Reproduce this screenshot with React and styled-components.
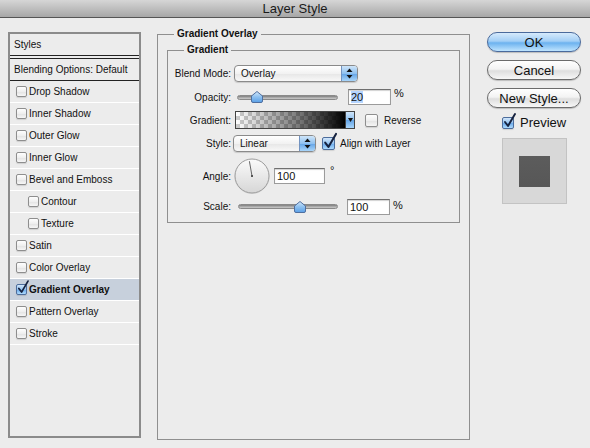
import React from 'react';
import styled, { createGlobalStyle } from 'styled-components';

const Global = createGlobalStyle`
  html, body { margin: 0; padding: 0; background: #ececec; }
  body { font-family: "Liberation Sans", Arial, sans-serif; font-size: 10px; color: #111; }
  * { box-sizing: border-box; }
`;

const Window = styled.div`
  width: 590px;
  height: 448px;
  background: #ececec;
  display: flex;
  flex-direction: column;
  overflow: hidden;
`;

const TitleBar = styled.div`
  height: 18px;
  flex: none;
  border-bottom: 1px solid #555;
  background: linear-gradient(#d6d6d6, #a7a7a7);
  display: flex;
  align-items: center;
  justify-content: center;
  font-size: 13px;
  color: #1a1a1a;
  padding-bottom: 1px;
`;

const Body = styled.div`
  display: flex;
  align-items: flex-start;
  padding: 14px 0 0 8px;
`;

/* ---------- styles list ---------- */
const StylesList = styled.div`
  width: 133px;
  height: 406px;
  border: 2px solid #8b8b8b;
  display: flex;
  flex-direction: column;
  flex: none;
`;

const ListHeader = styled.div`
  height: 22px;
  border-bottom: 1px solid #222;
  display: flex;
  align-items: center;
  padding-left: 4px;
`;

const BlendRow = styled.div`
  margin-top: 2px;
  height: 23px;
  border-top: 1px solid #222;
  border-bottom: 1px solid #222;
  display: flex;
  align-items: center;
  padding-left: 4px;
`;

const Item = styled.div`
  height: 22px;
  border-bottom: 1px solid #fff;
  display: flex;
  align-items: center;
  gap: 2px;
  padding-left: ${p => (p.$indent ? 18 : 6)}px;
  background: ${p => (p.$selected ? '#c7d0dc' : 'transparent')};
  font-weight: ${p => (p.$selected ? 'bold' : 'normal')};
`;

/* ---------- checkbox ---------- */
const Box = styled.span`
  position: relative;
  display: inline-block;
  flex: none;
  width: ${p => p.$size}px;
  height: ${p => p.$size}px;
  border: 1px solid ${p => (p.$checked ? '#4d6d9c' : '#8e8e8e')};
  border-radius: 2px;
  background: ${p =>
    p.$checked
      ? 'linear-gradient(#d2e6fa, #93c3f2 50%, #6aa9ea 51%, #addafd)'
      : 'linear-gradient(#fefefe, #efefef 50%, #e2e2e2 51%, #f6f6f6)'};
  box-shadow: 0 1px 1px rgba(0, 0, 0, 0.12);
`;

const Mark = styled.svg`
  position: absolute;
  left: 0;
  top: -3px;
  overflow: visible;
`;

const Check = ({ checked, size = 11 }) => (
  <Box $checked={checked} $size={size}>
    {checked && (
      <Mark width={size} height={size} viewBox="0 0 12 12">
        <path d="M2 7 L5 11 L12 -1" fill="none" stroke="#16223f" strokeWidth="1.9" strokeLinecap="round" strokeLinejoin="round" />
      </Mark>
    )}
  </Box>
);

/* ---------- main panel ---------- */
const Group = styled.fieldset`
  margin: 0;
  border: 1px solid #8f8f8f;
  padding: ${p => p.$pad};
  width: ${p => p.$w}px;
  height: ${p => p.$h}px;
  min-width: 0;
  flex: none;
`;

const Outer = styled(Group)`
  margin-left: 16px;
  margin-top: -4px;
`;

const Legend = styled.legend`
  font-weight: bold;
  font-size: 10px;
  line-height: 12px;
  padding: 0 3px;
  margin-left: ${p => p.$ml}px;
`;

const Row = styled.div`
  display: flex;
  align-items: center;
  height: ${p => p.$h}px;
`;

const Label = styled.div`
  width: 66px;
  flex: none;
  text-align: right;
  padding-right: 3px;
`;

const Select = styled.div`
  width: ${p => p.$w}px;
  height: 17px;
  margin-left: ${p => p.$ml || 0}px;
  border: 1px solid #8a8a8a;
  border-radius: 4px;
  background: linear-gradient(#ffffff, #f2f2f2 50%, #e6e6e6 51%, #f8f8f8);
  box-shadow: 0 1px 1px rgba(0, 0, 0, 0.15);
  display: flex;
  align-items: stretch;
  overflow: hidden;
  flex: none;
`;

const SelectText = styled.span`
  flex: 1;
  padding-left: 6px;
  display: flex;
  align-items: center;
`;

const Stepper = styled.span`
  width: 16px;
  border-left: 1px solid #7393c0;
  background: linear-gradient(#cfe5f9, #8fc1f0 50%, #62a3e6 51%, #a8d5fa);
  display: flex;
  align-items: center;
  justify-content: center;
`;

const Slider = styled.div`
  position: relative;
  width: ${p => p.$w}px;
  height: 14px;
  margin-left: ${p => p.$ml}px;
  display: flex;
  align-items: center;
  flex: none;
`;

const Track = styled.div`
  width: 100%;
  height: 5px;
  border-radius: 3px;
  background: linear-gradient(#7d7d7d, #a9a9a9 50%, #cacaca);
  border: 1px solid #8a8a8a;
`;

const Thumb = styled.svg`
  position: absolute;
  top: 1px;
  margin-left: -6px;
`;

const Field = styled.div`
  width: ${p => p.$w}px;
  height: 16px;
  margin-left: ${p => p.$ml}px;
  border: 1px solid #9b9b9b;
  border-top-color: #6f6f6f;
  background: #fff;
  box-shadow: inset 0 1px 1px rgba(0, 0, 0, 0.18);
  font-size: 11px;
  padding-left: 2px;
  display: flex;
  align-items: center;
  flex: none;
`;

const Selected = styled.span`
  background: #b5d5ff;
`;

const Unit = styled.span`
  margin-left: ${p => p.$ml || 3}px;
  font-size: 11px;
  align-self: flex-start;
  margin-top: ${p => p.$mt || 2}px;
`;

const GradientBar = styled.div`
  width: 111px;
  height: 18px;
  margin-left: 1px;
  border: 1px solid #444;
  background:
    linear-gradient(to right, rgba(0, 0, 0, 0), rgba(0, 0, 0, 0.55) 60%, #000),
    repeating-conic-gradient(#cdcdcd 0 25%, #ffffff 0 50%) 0 0 / 8px 8px;
  flex: none;
`;

const DropButton = styled.div`
  width: 9px;
  height: 18px;
  border: 1px solid #444;
  border-left: none;
  background: linear-gradient(#cfe5f9, #8fc1f0 50%, #62a3e6 51%, #a8d5fa);
  display: flex;
  align-items: center;
  justify-content: center;
  flex: none;
`;

const CheckLabel = styled.span`
  margin-left: ${p => p.$ml}px;
  display: flex;
  align-items: center;
  gap: ${p => p.$gap}px;
`;

const Dial = styled.svg`
  flex: none;
`;

/* ---------- right column ---------- */
const Side = styled.div`
  margin-left: 17px;
  display: flex;
  flex-direction: column;
  gap: 8px;
  flex: none;
`;

const Button = styled.div`
  width: 94px;
  height: 20px;
  border-radius: 10px;
  border: 1px solid ${p => (p.$primary ? '#4a6a9c' : '#6b6b6b')};
  background: ${p =>
    p.$primary
      ? 'linear-gradient(#d6eafc, #a3cff6 45%, #6cb2ef 55%, #bfe4fe)'
      : 'linear-gradient(#ffffff, #f3f3f3 45%, #dedede 55%, #f7f7f7)'};
  box-shadow: 0 1px 1px rgba(0, 0, 0, 0.2);
  display: flex;
  align-items: center;
  justify-content: center;
  font-size: 13px;
  color: #111;
`;

const PreviewToggle = styled.div`
  display: flex;
  align-items: center;
  gap: 6px;
  margin-left: 15px;
  height: 13px;
  font-size: 13px;
`;

const PreviewBox = styled.div`
  margin-left: 15px;
  margin-top: 1px;
  width: 65px;
  height: 66px;
  background: #d8d8d8;
  border: 1px solid #c3c3c3;
  display: flex;
  align-items: center;
  justify-content: center;
`;

const Swatch = styled.div`
  width: 31px;
  height: 31px;
  background: linear-gradient(#5c5c5c, #575757);
`;

const StepArrows = () => (
  <svg width="7" height="11" viewBox="0 0 7 11">
    <path d="M3.5 0.5 L6.5 4 L0.5 4 Z" fill="#111" />
    <path d="M3.5 10.5 L6.5 7 L0.5 7 Z" fill="#111" />
  </svg>
);

const ThumbShape = ({ pos }) => (
  <Thumb width="12" height="12" viewBox="0 0 12 12" style={{ left: `${pos}%` }}>
    <defs>
      <linearGradient id="tg" x1="0" y1="0" x2="0" y2="1">
        <stop offset="0" stopColor="#d4e9fb" />
        <stop offset="0.5" stopColor="#8cc0f0" />
        <stop offset="1" stopColor="#5a9fe6" />
      </linearGradient>
    </defs>
    <path d="M6 0.5 L11.5 5 L11.5 10 Q11.5 11.5 10 11.5 L2 11.5 Q0.5 11.5 0.5 10 L0.5 5 Z" fill="url(#tg)" stroke="#4f6f9f" strokeWidth="1" />
  </Thumb>
);

const items = [
  { label: 'Drop Shadow' },
  { label: 'Inner Shadow' },
  { label: 'Outer Glow' },
  { label: 'Inner Glow' },
  { label: 'Bevel and Emboss' },
  { label: 'Contour', indent: true },
  { label: 'Texture', indent: true },
  { label: 'Satin' },
  { label: 'Color Overlay' },
  { label: 'Gradient Overlay', checked: true, selected: true },
  { label: 'Pattern Overlay' },
  { label: 'Stroke' },
];

const angle = 100;
const rad = (angle * Math.PI) / 180;
const dx = 18 + Math.cos(rad) * 15;
const dy = 18 - Math.sin(rad) * 15;

export default function App() {
  return (
    <Window>
      <Global />
      <TitleBar>Layer Style</TitleBar>
      <Body>
        <StylesList>
          <ListHeader>Styles</ListHeader>
          <BlendRow>Blending Options: Default</BlendRow>
          {items.map(it => (
            <Item key={it.label} $indent={it.indent} $selected={it.selected}>
              <Check checked={it.checked} />
              {it.label}
            </Item>
          ))}
        </StylesList>

        <Outer $w={313} $h={412} $pad="4px 9px 0 9px">
          <Legend $ml={7}>Gradient Overlay</Legend>
          <Group $w={293} $h={179} $pad="6px 0 5px 0">
            <Legend $ml={16}>Gradient</Legend>
            <Row $h={23}>
              <Label>Blend Mode:</Label>
              <Select $w={124}>
                <SelectText>Overlay</SelectText>
                <Stepper><StepArrows /></Stepper>
              </Select>
            </Row>
            <Row $h={24}>
              <Label>Opacity:</Label>
              <Slider $w={101} $ml={3}>
                <Track />
                <ThumbShape pos={20} />
              </Slider>
              <Field $w={43} $ml={10}><Selected>20</Selected></Field>
              <Unit>%</Unit>
            </Row>
            <Row $h={22}>
              <Label>Gradient:</Label>
              <GradientBar />
              <DropButton>
                <svg width="5" height="4" viewBox="0 0 5 4"><path d="M0 0 L5 0 L2.5 4 Z" fill="#111" /></svg>
              </DropButton>
              <CheckLabel $ml={10} $gap={6}>
                <Check size={13} />
                Reverse
              </CheckLabel>
            </Row>
            <Row $h={24}>
              <Label>Style:</Label>
              <Select $w={83} $ml={-1}>
                <SelectText>Linear</SelectText>
                <Stepper><StepArrows /></Stepper>
              </Select>
              <CheckLabel $ml={6} $gap={5}>
                <Check size={13} checked />
                Align with Layer
              </CheckLabel>
            </Row>
            <Row $h={42}>
              <Label>Angle:</Label>
              <Dial width="37" height="37" viewBox="0 0 37 37">
                <defs>
                  <linearGradient id="dg" x1="0" y1="0" x2="0" y2="1">
                    <stop offset="0" stopColor="#fbfbfb" />
                    <stop offset="1" stopColor="#d6d6d6" />
                  </linearGradient>
                </defs>
                <circle cx="18" cy="18.5" r="17.5" fill="#c9c9c9" opacity="0.5" />
                <circle cx="18" cy="18" r="17" fill="url(#dg)" stroke="#9c9c9c" strokeWidth="1" />
                <line x1="18" y1="18" x2={dx} y2={dy} stroke="#666" strokeWidth="1" />
                <rect x="17" y="17" width="2" height="2" fill="#555" />
              </Dial>
              <Field $w={51} $ml={3}>100</Field>
              <Unit $ml={5} $mt={9}>°</Unit>
            </Row>
            <Row $h={19}>
              <Label>Scale:</Label>
              <Slider $w={100} $ml={4}>
                <Track />
                <ThumbShape pos={62} />
              </Slider>
              <Field $w={43} $ml={9}>100</Field>
              <Unit>%</Unit>
            </Row>
          </Group>
        </Outer>

        <Side>
          <Button $primary>OK</Button>
          <Button>Cancel</Button>
          <Button>New Style...</Button>
          <PreviewToggle>
            <Check size={12} checked />
            Preview
          </PreviewToggle>
          <PreviewBox>
            <Swatch />
          </PreviewBox>
        </Side>
      </Body>
    </Window>
  );
}
